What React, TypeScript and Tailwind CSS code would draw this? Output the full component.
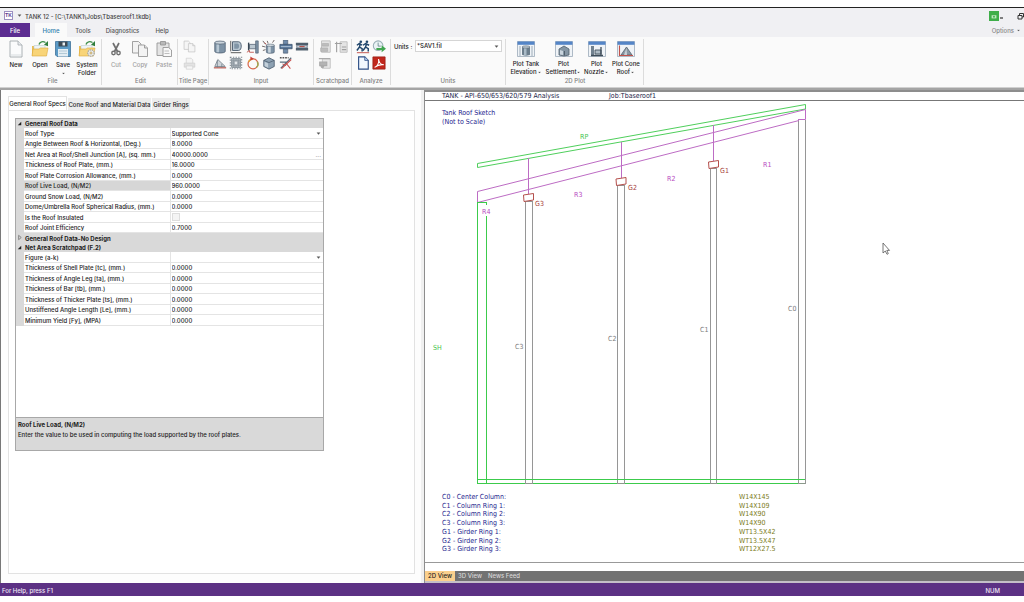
import React from "react";

type Row =
  | { kind: "group"; name: string; open: boolean }
  | { kind: "text" | "select" | "check" | "more"; name: string; value: string; active?: boolean };

const rows: Row[] = [
  { kind: "group", name: "General Roof Data", open: true },
  { kind: "select", name: "Roof Type", value: "Supported Cone" },
  { kind: "text", name: "Angle Between Roof & Horizontal, (Deg.)", value: "8.0000" },
  { kind: "more", name: "Net Area at Roof/Shell Junction [A], (sq. mm.)", value: "40000.0000" },
  { kind: "text", name: "Thickness of Roof Plate, (mm.)", value: "16.0000" },
  { kind: "text", name: "Roof Plate Corrosion Allowance, (mm.)", value: "0.0000" },
  { kind: "text", name: "Roof Live Load, (N/M2)", value: "960.0000", active: true },
  { kind: "text", name: "Ground Snow Load, (N/M2)", value: "0.0000" },
  { kind: "text", name: "Dome/Umbrella Roof Spherical Radius, (mm.)", value: "0.0000" },
  { kind: "check", name: "Is the Roof Insulated", value: "" },
  { kind: "text", name: "Roof Joint Efficiency", value: "0.7000" },
  { kind: "group", name: "General Roof Data-No Design", open: false },
  { kind: "group", name: "Net Area Scratchpad (F.2)", open: true },
  { kind: "select", name: "Figure (a-k)", value: "" },
  { kind: "text", name: "Thickness of Shell Plate [tc], (mm.)", value: "0.0000" },
  { kind: "text", name: "Thickness of Angle Leg [ta], (mm.)", value: "0.0000" },
  { kind: "text", name: "Thickness of Bar [tb], (mm.)", value: "0.0000" },
  { kind: "text", name: "Thickness of Thicker Plate [ts], (mm.)", value: "0.0000" },
  { kind: "text", name: "Unstiffened Angle Length [Le], (mm.)", value: "0.0000" },
  { kind: "text", name: "Minimum Yield [Fy], (MPA)", value: "0.0000" },
];

const legend = [
  ["C0 - Center Column:", "W14X145"],
  ["C1 - Column Ring 1:", "W14X109"],
  ["C2 - Column Ring 2:", "W14X90"],
  ["C3 - Column Ring 3:", "W14X90"],
  ["G1 - Girder Ring 1:", "WT13.5X42"],
  ["G2 - Girder Ring 2:", "WT13.5X47"],
  ["G3 - Girder Ring 3:", "WT12X27.5"],
];

const Caret = ({ className = "" }: { className?: string }) => (
  <svg viewBox="0 0 6 4" className={"h-[3px] w-[5px] shrink-0 " + className} aria-hidden="true">
    <path d="M0.5 0.5h5L3 3.5z" fill="#555" />
  </svg>
);

/* ---------- ribbon icons ---------- */

const NewIcon = () => (
  <svg viewBox="0 0 18 18" className="size-[18px]">
    <path d="M3 1h8l4 4v12H3z" fill="#fafbfc" stroke="#a3a9ae" strokeWidth=".9" />
    <path d="M11 1v4h4" fill="#e8ebee" stroke="#a3a9ae" strokeWidth=".8" />
    <path d="M4 14h10v2H4z" fill="#e9ecee" />
  </svg>
);

const FolderIcon = ({ gear = false }: { gear?: boolean }) => (
  <svg viewBox="0 0 18 18" className="size-[18px]">
    <path d="M1 6h6l1 1.500h6V16H1z" fill="#e9bd55" />
    <path d="M3 5.500h11v8H3z" fill="#eef4f7" stroke="#b5c4c9" strokeWidth=".5" />
    <path d="M1 16l1-7h6l1.500-1H17l-1.500 8z" fill="#f8d478" stroke="#dba83b" strokeWidth=".6" />
    <path d="M8 4.500C9 1.500 12 1 14.500 2.500" fill="none" stroke="#3f8f4b" strokeWidth="1.400" />
    <path d="M13 4.800L17 1v5.200z" fill="#2f7d3c" />
    {gear && (
      <>
        <circle cx="13" cy="13" r="3.200" fill="#f1f1ee" stroke="#a7a79f" strokeWidth="1.300" strokeDasharray="1.500 .7" />
        <circle cx="13" cy="13" r="1.200" fill="#f5cf74" stroke="#999" strokeWidth=".5" />
      </>
    )}
  </svg>
);

const SaveIcon = () => (
  <svg viewBox="0 0 18 18" className="size-[18px]">
    <path d="M1.500 1.500h15v15H3l-1.500-1.500z" fill="#5b9ac6" stroke="#3f7299" strokeWidth=".8" />
    <path d="M4.500 1.500h9v5h-9z" fill="#3e4a55" />
    <path d="M8.500 2.500h2.500v3H8.500z" fill="#e9eef1" />
    <path d="M4 9h10v7.500H4z" fill="#e3edf3" />
    <path d="M5 11h8M5 13.500h8" stroke="#a7c0cf" strokeWidth=".8" />
  </svg>
);

const CutIcon = () => (
  <svg viewBox="0 0 18 18" className="size-[18px]" fill="none" stroke="#707070">
    <path d="M6 3L10.500 11.500M12 3L7.500 11.500" strokeWidth="1.700" />
    <circle cx="6.500" cy="13" r="1.700" strokeWidth="1.400" />
    <circle cx="11.500" cy="13" r="1.700" strokeWidth="1.400" />
  </svg>
);

const CopyIcon = ({ small = false }: { small?: boolean }) => (
  <svg viewBox="0 0 18 18" className={small ? "size-[13px]" : "size-[18px]"} fill="#f3f3f3" stroke="#979797" strokeWidth=".9">
    <path d="M1.500 1.500h6l2.500 2.500v9H1.500z" />
    <path d="M7.500 5h6l3 3v8.500h-9z" />
    <path d="M13.500 5v3h3" fill="#ddd" />
  </svg>
);

const PasteIcon = () => (
  <svg viewBox="0 0 18 18" className="size-[18px]" fill="#e4e4e4" stroke="#979797" strokeWidth=".9">
    <path d="M2 3h12v12.500H2z" />
    <path d="M5.500 1.500h5V5h-5z" fill="#b9b9b9" />
    <path d="M8 7.500h5.500l3 2.500v6.500H8z" fill="#f8f8f8" />
    <path d="M9.500 11h4.500M9.500 13.500h5" strokeWidth=".6" />
  </svg>
);

const PrintIcon = () => (
  <svg viewBox="0 0 16 16" className="size-[13px]" fill="#d4d4d4" stroke="#b0b0b0" strokeWidth=".8">
    <path d="M4 1.500h6l2 2V8H4z" fill="#f1f1f1" />
    <path d="M1.500 7.500h13v5h-13z" />
    <path d="M4 11h8v4H4z" fill="#f4f4f4" />
  </svg>
);

const Small = ({ children }: { children: React.ReactNode }) => (
  <svg viewBox="0 0 16 16" className="size-[14px]">
    {children}
  </svg>
);

const cyl = "#7e93a6";
const dark = "#47586a";

const inputIcons: { name: string; art: React.ReactNode }[] = [
  {
    name: "Tank",
    art: (
      <>
        <path d="M2 3v10c0 2.500 12 2.500 12 0V3z" fill={cyl} stroke={dark} strokeWidth=".8" />
        <path d="M4 4v10h3V4z" fill="#b9c8d4" />
        <ellipse cx="8" cy="3" rx="6" ry="1.800" fill="#cbd5dd" stroke={dark} strokeWidth=".8" />
      </>
    ),
  },
  {
    name: "Shell course",
    art: (
      <>
        <path d="M4 2h7c4 0 4 10 0 10H4z" fill="#b8c6d1" stroke={dark} strokeWidth="1" />
        <path d="M6 4h4c2 1 2 5 0 6H6z" fill="#8195a6" />
        <path d="M2 1v12M2 14.500h12" stroke="#555" strokeWidth="1.100" />
      </>
    ),
  },
  {
    name: "Nozzle",
    art: (
      <>
        <path d="M11 1h3v14h-3z" fill={cyl} stroke={dark} strokeWidth=".7" />
        <path d="M4 5h7v5H4z" fill="#bcc8d1" stroke={dark} strokeWidth=".8" />
        <path d="M3 3v9" stroke="#394754" strokeWidth="1.600" />
        <path d="M1 14l3-2v2h5" fill="none" stroke="#c0524c" strokeWidth="1" />
      </>
    ),
  },
  {
    name: "Wind",
    art: (
      <>
        <path d="M5 6v8c0 1.500 9 1.500 9 0V6z" fill={cyl} stroke={dark} strokeWidth=".7" />
        <path d="M7 6v8.500h3V6z" fill="#cad5dd" />
        <ellipse cx="9.500" cy="6" rx="4.500" ry="1.300" fill="#dce3e8" stroke={dark} strokeWidth=".6" />
        <path d="M1 1l3 4M6 1l1 3M12 3l2-3M0 7l4 1M1 12l3-1" stroke="#665c5c" strokeWidth="1" />
        <path d="M3 3l2 2" stroke="#c0524c" />
      </>
    ),
  },
  {
    name: "Bolts",
    art: (
      <>
        <path d="M5 0h5v5H5zM5 10h5v5H5z" fill="#6f8baa" stroke={dark} strokeWidth=".7" />
        <path d="M1 5h14v5H1z" fill="#58779a" stroke="#344c65" strokeWidth=".8" />
        <path d="M2 7.500h12" stroke="#a5bad0" strokeWidth="1.200" />
      </>
    ),
  },
  {
    name: "Flange",
    art: (
      <>
        <path d="M1 3h14v3H1zM1 9h14v3H1z" fill="#51606e" />
        <path d="M2 6h12v3H2z" fill="#cad2d9" stroke={dark} strokeWidth=".7" />
        <path d="M5 7.500h6" stroke="#b34f4a" strokeWidth="1.200" />
      </>
    ),
  },
  {
    name: "Roof",
    art: (
      <>
        <path d="M2 12L5.500 4 14 12z" fill="#cfd5da" stroke="#7b858e" strokeWidth="1" />
        <path d="M1 13.500h14" stroke="#b75a50" strokeWidth="1.400" />
        <path d="M5 5v8M10 9v4" stroke="#6f7c88" strokeWidth=".8" />
      </>
    ),
  },
  {
    name: "Grillage",
    art: (
      <>
        <path d="M3 3h10v10H3z" fill="#b4bbc1" stroke="#7c8790" strokeWidth="1" />
        <path d="M1.500 1.500h13v13h-13z" fill="none" stroke="#7c8790" strokeWidth="1.200" strokeDasharray="1.500 1.500" />
        <path d="M5.500 3v10M8 3v10M10.500 3v10M3 5.500h10M3 8h10M3 10.500h10" stroke="#7c8790" strokeWidth=".7" />
        <circle cx="8" cy="8" r="1.600" fill="#e3e7ea" />
      </>
    ),
  },
  {
    name: "Cyclic data",
    art: (
      <>
        <circle cx="8" cy="9" r="5.700" fill="none" stroke="#d7664d" strokeWidth="1.400" />
        <path d="M8 3.300a5.700 5.700 0 0 0-5 3.500" fill="none" stroke="#e3a335" strokeWidth="1.600" />
        <path d="M13 6.500a5.700 5.700 0 0 1-1 6.500" fill="none" stroke="#9dab56" strokeWidth="1.600" />
        <path d="M5 .5l4 2.500-4 2.500z" fill="#c9413a" />
      </>
    ),
  },
  {
    name: "Settlement",
    art: (
      <>
        <path d="M2 5l6-3 6 3v7l-6 3-6-3z" fill="#8da1b2" stroke={dark} strokeWidth=".9" />
        <path d="M2 5l6 2.500L14 5" fill="none" stroke={dark} strokeWidth=".8" />
        <path d="M3 6.500l4 2v5l-4-2z" fill="#c3d0da" />
      </>
    ),
  },
  {
    name: "Seismic",
    art: (
      <>
        <path d="M1 2h10" stroke="#555" strokeWidth="1.500" strokeDasharray="2 1" />
        <path d="M1 7h8M2 14L14 2" stroke="#5b6c7b" strokeWidth="1.400" />
        <path d="M3 14.500L14 4M8 8l5 6.500M4 9l4 2" stroke="#c94f4d" strokeWidth="1.200" fill="none" />
      </>
    ),
  },
];

const scratchIcons: { name: string; art: React.ReactNode }[] = [
  {
    name: "Beam scratchpad",
    art: (
      <>
        <path d="M4 1h10v13H4z" fill="#e4e4e4" stroke="#bbb" />
        <path d="M5 4h7v3H5zM3 9h8v4H3z" fill="#bdbdbd" stroke="#a4a4a4" strokeWidth=".6" />
      </>
    ),
  },
  {
    name: "Column scratchpad",
    art: (
      <>
        <path d="M7 2h8v12H7z" fill="#e4e4e4" stroke="#bbb" />
        <path d="M3 2v12M1 4h8M9 8h5M9 11h5" stroke="#a0a0a0" strokeWidth="1.300" />
      </>
    ),
  },
  {
    name: "Plate scratchpad",
    art: (
      <>
        <path d="M5 3h9v11H5z" fill="#e6e6e6" stroke="#c0c0c0" />
        <path d="M1 3h13M2 7h8v4H2z" fill="#b4b4b4" stroke="#aaa" strokeWidth="1.300" />
        <circle cx="5" cy="12" r="2" fill="#aaa" />
      </>
    ),
  },
];

const analyzeIcons: { name: string; art: React.ReactNode }[] = [
  {
    name: "Run analysis",
    art: (
      <>
        <g fill="none" stroke="#20466c" strokeWidth="1.700">
          <path d="M5 4L4 8l3 2v3M4 8l-3 4M1 6l3-2 3 2" />
          <path d="M12 4l-1 4 3 2v3M11 8l-3 4M8 6l3-2 4 2" />
        </g>
        <circle cx="5.500" cy="2" r="1.500" fill="#20466c" />
        <circle cx="12.500" cy="2" r="1.500" fill="#20466c" />
        <path d="M1 14.500h14" stroke="#c3544e" strokeWidth="1.100" />
      </>
    ),
  },
  {
    name: "Batch run",
    art: (
      <>
        <circle cx="7" cy="6.500" r="5.500" fill="#eaf3f4" stroke="#9aafb6" strokeWidth="1.200" />
        <path d="M7 3v4h3" stroke="#6e8791" fill="none" />
        <path d="M5 9h6V6l5 4-5 4v-2.500H5z" fill="#42a650" />
      </>
    ),
  },
  {
    name: "View report",
    art: (
      <>
        <path d="M3 1h7l4 4v10H3z" fill="#f1f7ff" stroke="#2c4d85" strokeWidth="1.300" />
        <path d="M10 1v4h4" fill="#bdd4f3" stroke="#2c4d85" strokeWidth=".9" />
      </>
    ),
  },
  {
    name: "PDF report",
    art: (
      <>
        <path d="M1 1h14v14H1z" fill="#c1271c" stroke="#951d14" strokeWidth=".8" />
        <path d="M3 13c4-2 5-6 4.500-9.500C8 8 10 10 13.500 10 9.500 9.500 6 10.500 3 13z" fill="none" stroke="#fff" strokeWidth="1.200" />
      </>
    ),
  },
];

const PlotFrame = ({ children }: { children: React.ReactNode }) => (
  <svg viewBox="0 0 18 16" className="h-4 w-[18px]">
    <path d="M.5.5h17v15H.5z" fill="#eff3f7" stroke="#9cabb9" strokeWidth=".8" />
    <path d="M.5.5h17v3.300H.5z" fill="#5485c7" />
    {children}
  </svg>
);

const plots = [
  {
    l1: "Plot Tank",
    l2: "Elevation",
    w: "w-[38px]",
    art: (
      <>
        <path d="M5 6v7.500c0 1.500 8 1.500 8 0V6z" fill="#6c7e8d" />
        <path d="M7 6.500v8h2.500v-8z" fill="#a9bac7" />
        <ellipse cx="9" cy="6" rx="4" ry="1.200" fill="#b9c5cf" stroke="#55626e" strokeWidth=".5" />
        <path d="M3 5v10M15 5v10" stroke="#7f8f9e" strokeWidth=".7" />
      </>
    ),
  },
  {
    l1: "Plot",
    l2: "Settlement",
    w: "w-[37px]",
    art: (
      <>
        <path d="M4 8l5-3 5 3v6l-5 1-5-1z" fill="#8495a3" stroke="#51606d" strokeWidth=".8" />
        <path d="M5 9l3 1v4l-3-.500z" fill="#cad5de" />
        <path d="M9.500 10v4.500" stroke="#51606d" />
      </>
    ),
  },
  {
    l1: "Plot",
    l2: "Nozzle",
    w: "w-[29px]",
    art: (
      <>
        <path d="M3 5h3v9H3z" fill="#71818f" />
        <path d="M7 9h6v4H7z" fill="#aebbc5" stroke="#44525e" strokeWidth=".9" />
        <path d="M13 6v8M3 14.500h12" stroke="#3f4d59" strokeWidth="1.300" />
      </>
    ),
  },
  {
    l1: "Plot Cone",
    l2: "Roof",
    w: "w-[30px]",
    art: (
      <>
        <path d="M4 14L9.500 6 15 14z" fill="#8a98a4" stroke="#55626e" strokeWidth=".8" />
        <path d="M7 14l2.500-7L10 14z" fill="#c6d0d8" />
        <path d="M2.500 4.500V14.500H16" fill="none" stroke="#c2524a" strokeWidth="1.100" />
      </>
    ),
  },
];

/* ---------- ribbon ---------- */

const Group = ({ label, className, children }: { label: string; className: string; children: React.ReactNode }) => (
  <section aria-label={label} className={"flex h-[46px] shrink-0 flex-col border-r border-[#dcdcdc] " + className}>
    <div className="flex flex-1 items-start pt-px">{children}</div>
    <div className="text-center leading-[8px] whitespace-nowrap text-[#808080]">{label}</div>
  </section>
);

const BigButton = ({
  icon,
  l1,
  l2,
  w,
  muted = false,
  drop = false,
}: {
  icon: React.ReactNode;
  l1: string;
  l2?: string;
  w: string;
  muted?: boolean;
  drop?: boolean;
}) => (
  <button type="button" className={"flex shrink-0 flex-col items-center gap-[3px] whitespace-nowrap " + w + (muted ? " text-[#a0a0a0]" : " text-[#222]")}>
    {icon}
    <span className="flex flex-col items-center leading-[8px]">
      <span>{l1}</span>
      {l2 && (
        <span className="flex items-center">
          {l2}
          {drop && <Caret className="scale-75" />}
        </span>
      )}
      {!l2 && drop && <Caret className="mt-[3px] scale-75" />}
    </span>
  </button>
);

const IconGrid = ({ icons, cols }: { icons: { name: string; art: React.ReactNode }[]; cols: string }) => (
  <div className={"mx-auto grid justify-items-center gap-y-[2px] " + cols}>
    {icons.map((i) => (
      <button type="button" key={i.name} aria-label={i.name}>
        <Small>{i.art}</Small>
      </button>
    ))}
  </div>
);

const Ribbon = () => (
  <div className="flex h-[51px] shrink-0 items-start border-b border-[#d0d0d0] bg-[#fafafa] pt-[2px]">
    <Group label="File" className="w-[102px] pl-1">
      <BigButton icon={<NewIcon />} l1="New" w="w-6" />
      <BigButton icon={<FolderIcon />} l1="Open" w="w-6" />
      <BigButton icon={<SaveIcon />} l1="Save" w="w-[22px]" drop />
      <BigButton icon={<FolderIcon gear />} l1="System" l2="Folder" w="w-[26px]" />
    </Group>
    <Group label="Edit" className="w-[76px] pl-[2px]">
      <BigButton icon={<CutIcon />} l1="Cut" w="w-6" muted />
      <BigButton icon={<CopyIcon />} l1="Copy" w="w-6" muted />
      <BigButton icon={<PasteIcon />} l1="Paste" w="w-6" muted />
    </Group>
    <Group label="Title Page" className="w-[31px]">
      <div className="flex flex-col gap-1 pl-[5px] opacity-60">
        <button type="button" aria-label="Copy title page">
          <CopyIcon small />
        </button>
        <button type="button" aria-label="Print title page">
          <PrintIcon />
        </button>
      </div>
    </Group>
    <Group label="Input" className="w-[105px]">
      <IconGrid icons={inputIcons} cols="w-[99px] grid-cols-6" />
    </Group>
    <Group label="Scratchpad" className="w-[38px]">
      <IconGrid icons={scratchIcons} cols="w-8 grid-cols-2" />
    </Group>
    <Group label="Analyze" className="w-[39px]">
      <IconGrid icons={analyzeIcons} cols="w-[33px] grid-cols-2" />
    </Group>
    <Group label="Units" className="w-[115px] px-[3px]">
      <div className="flex w-full items-center justify-between">
        <label htmlFor="units" className="text-[#222]">
          Units :
        </label>
        <div className="flex h-3 w-[87px] items-center border border-[#d5d5d5] bg-white pr-[2px] pl-px">
          <select id="units" className="min-w-0 flex-1 appearance-none bg-transparent leading-[10px] text-[#222] outline-none">
            <option>*SAV1.fil</option>
          </select>
          <Caret />
        </div>
      </div>
    </Group>
    <Group label="2D Plot" className="w-[138px] pt-px pl-px">
      {plots.map((p) => (
        <BigButton key={p.l2} icon={<PlotFrame>{p.art}</PlotFrame>} l1={p.l1} l2={p.l2} w={p.w} drop />
      ))}
    </Group>
  </div>
);

/* ---------- property grid ---------- */

const ValueCell = ({ row, id }: { row: Exclude<Row, { kind: "group" }>; id: string }) => {
  if (row.kind === "select")
    return (
      <div className="flex items-center pr-[2px]">
        <select id={id} className="h-[9px] min-w-0 flex-1 appearance-none bg-transparent outline-none">
          <option>{row.value}</option>
        </select>
        <Caret />
      </div>
    );
  if (row.kind === "check")
    return <input id={id} type="checkbox" className="block size-2 appearance-none border border-[#ddd] bg-[#f4f4f4]" />;
  return (
    <div className="flex items-center pr-[2px]">
      <input id={id} type="text" defaultValue={row.value} className="h-[9px] min-w-0 flex-1 bg-transparent outline-none" />
      {row.kind === "more" && (
        <button type="button" aria-label="Edit net area" className="leading-[9px] text-[#777]">
          ...
        </button>
      )}
    </div>
  );
};

const PropertyGrid = () => (
  <div className="mt-[7px] ml-[6px] flex h-[333px] w-[309px] flex-col border border-[#a8a8a8] bg-white text-[#222]">
    <table className="h-[207px] w-full table-fixed border-collapse leading-[9px]">
      <colgroup>
        <col className="w-2" />
        <col className="w-[146px]" />
        <col />
      </colgroup>
      <tbody>
        {rows.map((row, i) =>
          row.kind === "group" ? (
            <tr key={row.name} className="bg-[#d9d9d9]">
              <td className="p-0">
                <svg viewBox="0 0 8 8" className="size-[7px]" aria-hidden="true">
                  {row.open ? <path d="M6 2v4H2z" fill="#222" /> : <path d="M3 1.500L6 4 3 6.500z" fill="none" stroke="#666" strokeWidth=".8" />}
                </svg>
              </td>
              <th colSpan={2} className="p-0 pl-px text-left font-bold whitespace-nowrap">
                {row.name}
              </th>
            </tr>
          ) : (
            <tr key={row.name}>
              <td className="bg-[#d9d9d9] p-0" />
              <th
                className={
                  "border-r border-b border-[#e4e4e4] p-0 pl-px text-left font-medium whitespace-nowrap " + (row.active ? "bg-[#d6d6d6]" : "")
                }
              >
                <label htmlFor={"prop-" + i}>{row.name}</label>
              </th>
              <td className="border-b border-[#e4e4e4] p-0 pl-px">
                <ValueCell row={row} id={"prop-" + i} />
              </td>
            </tr>
          )
        )}
      </tbody>
    </table>
    <div className="mt-auto h-[33px] border-t border-[#a8a8a8] bg-[#d9d9d9] px-[2px] pt-[2px] leading-[10px]">
      <h2 className="font-bold">Roof Live Load, (N/M2)</h2>
      <p className="whitespace-nowrap">Enter the value to be used in computing the load supported by the roof plates.</p>
    </div>
  </div>
);

const InputPane = () => (
  <section className="flex w-[421px] shrink-0 flex-col border-l border-[#777] bg-[#fdfdfd] pt-[6px] pr-[6px] pb-[9px] pl-[7px]">
    <div role="tablist" className="flex h-[14px] shrink-0 items-end gap-px text-[#222]">
      <button type="button" role="tab" aria-selected="true" className="h-[14px] w-[59px] border border-b-0 border-[#e2e2e2] bg-white whitespace-nowrap">
        General Roof Specs
      </button>
      <button type="button" role="tab" aria-selected="false" className="h-3 w-[83px] bg-[#ececec] whitespace-nowrap">
        Cone Roof and Material Data
      </button>
      <button type="button" role="tab" aria-selected="false" className="h-3 w-[38px] bg-[#ececec] whitespace-nowrap">
        Girder Rings
      </button>
    </div>
    <div className="flex-1 border border-[#e2e2e2] bg-white">
      <PropertyGrid />
    </div>
  </section>
);

/* ---------- roof sketch ---------- */

const RoofSketch = () => (
  <svg
    viewBox="425 101 599 390"
    preserveAspectRatio="xMinYMin slice"
    className="block h-[390px] w-full font-['DejaVu_Sans_Condensed','DejaVu_Sans',sans-serif] text-[7px]"
    role="img"
    aria-label="Tank roof sketch"
  >
    <g fill="none" stroke="#969696" shapeRendering="crispEdges">
      <path d="M525.500 484V201.500H532.500V484" />
      <path d="M617.500 484V185.500H624.500V484" />
      <path d="M710.500 484V168.500H716.500V484" />
      <path d="M798.500 484V120M805.500 120V484" />
    </g>
    <path d="M477.500 163.500L805.500 104.500V109L477.500 167.500z" fill="none" stroke="#4fcf5c" />
    <path d="M526 483.500h6M618 483.500h6M711 483.500h5M799 483.500h6" stroke="#8a9a8a" />
    <g fill="none" stroke="#bd6cc4">
      <path d="M805.500 109.500L477.500 191.500V202.500L799 120.500M805.500 109.500V119.500H798" />
      <path d="M528.500 158V194M621.500 142V178M713.500 125V161" />
    </g>
    <g fill="#3ccb4c">
      <rect x="477" y="202" width="1" height="282" />
      <rect x="486" y="208" width="1" height="276" />
      <rect x="477" y="479" width="328" height="1" />
      <rect x="477" y="483" width="48" height="1" />
      <rect x="533" y="483" width="84" height="1" />
      <rect x="625" y="483" width="85" height="1" />
      <rect x="717" y="483" width="81" height="1" />
      <rect x="478" y="202" width="8" height="1" />
      <rect x="486" y="202" width="1" height="3" />
    </g>
    <g fill="#fff" stroke="#b5504c">
      <path d="M523.500 195L533.500 193.500V200L524 201.500z" />
      <path d="M616 179L626 177.500V184L616.500 185.500z" />
      <path d="M708.500 162L718.500 160.500V167L709 168.500z" />
    </g>
    <path d="M482 207h10v9h-10z" fill="#fff" />
    <g fill="#3fc44c">
      <text x="580" y="139">RP</text>
      <text x="433" y="350">SH</text>
    </g>
    <g fill="#b748bf">
      <text x="763" y="167">R1</text>
      <text x="667" y="181">R2</text>
      <text x="574" y="197">R3</text>
      <text x="482" y="214">R4</text>
    </g>
    <g fill="#a63c38">
      <text x="720" y="173">G1</text>
      <text x="628" y="190">G2</text>
      <text x="535" y="206">G3</text>
    </g>
    <g fill="#7a7a7a">
      <text x="788" y="311">C0</text>
      <text x="700" y="332">C1</text>
      <text x="608" y="341">C2</text>
      <text x="515" y="349">C3</text>
    </g>
    <path d="M883 243v10l2.300-2 1.700 3.300 1.300-.700-1.500-3.200h2.700z" fill="#fff" stroke="#555" strokeWidth=".8" />
  </svg>
);

const SketchPane = () => (
  <section className="ml-[3px] flex min-w-0 flex-1 flex-col border-t-2 border-l border-[#8d8d8d] bg-white font-['DejaVu_Sans_Condensed','DejaVu_Sans',sans-serif] text-[7px] font-normal">
    <header className="flex h-[9px] shrink-0 items-center border-b border-[#777] pl-[17px] leading-[8px] text-[#1c1c48]">
      <span className="w-[167px]">TANK - API-650/653/620/579 Analysis</span>
      <span>Job:Tbaseroof1</span>
    </header>
    <div className="relative min-h-0 flex-1 border-b border-[#999]">
      <p className="absolute top-2 left-[17px] leading-[9px] text-[#24248e]">
        Tank Roof Sketch
        <br />
        (Not to Scale)
      </p>
      <RoofSketch />
      <dl className="mt-[2px] ml-[17px] grid h-[61px] grid-cols-[297px_1fr] grid-rows-7 leading-[8px]">
        {legend.map(([k, v]) => (
          <React.Fragment key={k}>
            <dt className="text-[#24248e]">{k}</dt>
            <dd className="text-[#7a7a18]">{v}</dd>
          </React.Fragment>
        ))}
      </dl>
    </div>
    <nav role="tablist" className="mt-2 flex h-[10px] shrink-0 bg-[#727272] font-['Inter',sans-serif] text-[6px] font-medium text-[#d8d8d8]">
      <button type="button" role="tab" aria-selected="true" className="w-[30px] bg-[#fbd08d] leading-[10px] whitespace-nowrap text-[#222]">
        2D View
      </button>
      <button type="button" role="tab" aria-selected="false" className="w-[30px] leading-[10px] whitespace-nowrap">
        3D View
      </button>
      <button type="button" role="tab" aria-selected="false" className="w-[38px] leading-[10px] whitespace-nowrap">
        News Feed
      </button>
    </nav>
    <div className="h-[2px] shrink-0 bg-[#c4bfc8]" />
  </section>
);

export default function App() {
  return (
    <div className="flex h-screen flex-col overflow-hidden bg-white pt-[7px] pb-[6px] font-['Inter','Noto_Sans',sans-serif] text-[6px] font-medium text-[#333]">
      <header className="flex h-4 shrink-0 items-center border-t border-[#222] bg-[#f0f0f3] pl-1 text-[#444]">
        <span className="flex h-[9px] w-[9px] items-center justify-center border border-[#9c8fc0] bg-white text-[5px] font-bold text-[#5b3d93]">TK</span>
        <Caret className="ml-1" />
        <h1 className="ml-[3px] pt-[2px] leading-[10px]">TANK 12 - [C:\TANK1\Jobs\Tbaseroof1.tkdb]</h1>
        <div className="ml-auto flex items-center">
          <span className="flex size-[10px] items-center justify-center bg-[#3fae49]">
            <svg viewBox="0 0 10 10" className="size-[8px]" aria-hidden="true">
              <path d="M2 4h6v4H2z" fill="#bfe8bf" />
              <circle cx="5" cy="6" r="1.200" fill="#3fae49" />
            </svg>
          </span>
          <button type="button" aria-label="Minimize">
            <svg viewBox="0 0 6 8" className="h-2 w-[6px]">
              <path d="M1 6h3" stroke="#333" strokeWidth="1.200" />
            </svg>
          </button>
          <button type="button" aria-label="Restore" className="ml-3">
            <svg viewBox="0 0 7 8" className="h-2 w-[7px]" fill="none" stroke="#333">
              <path d="M2.500 3V1.500h4v3.500H5M1 3.500h4v3.500H1z" />
            </svg>
          </button>
        </div>
      </header>
      <nav className="flex h-[14px] shrink-0 items-stretch bg-[#f0f0f3] text-[#555]">
        <button type="button" className="w-[30px] bg-[#5c2d91] text-white">
          File
        </button>
        <button type="button" className="ml-[5px] w-8 bg-[#fafafa] text-[#2b7cab]">
          Home
        </button>
        <button type="button" className="w-8">
          Tools
        </button>
        <button type="button" className="w-[47px]">
          Diagnostics
        </button>
        <button type="button" className="w-8">
          Help
        </button>
        <button type="button" className="ml-auto flex items-center gap-[2px] pr-[3px] text-[#888]">
          Options <Caret className="scale-75" />
        </button>
      </nav>
      <Ribbon />
      <main className="flex min-h-0 flex-1 border-t-2 border-[#a4a4a4] bg-[#f0f0f0]">
        <InputPane />
        <SketchPane />
      </main>
      <footer className="flex h-[13px] shrink-0 items-center justify-between bg-[#5c3184] pt-[2px] pr-6 pl-[2px] text-[#efe8f5]">
        <span>For Help, press F1</span>
        <span>NUM</span>
      </footer>
    </div>
  );
}
